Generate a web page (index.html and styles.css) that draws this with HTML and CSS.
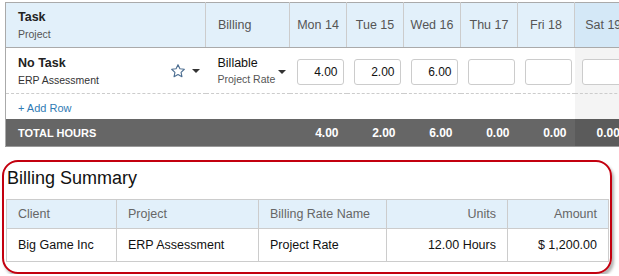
FILE: index.html
```html
<!DOCTYPE html>
<html lang="en">
<head>
    <meta charset="UTF-8" />
    <title>Timesheet</title>
    <link rel="stylesheet" href="styles.css">
</head>
<body>

<table class="sheet">
    <colgroup>
        <col class="c-task"><col class="c-billing">
        <col class="c-day"><col class="c-day"><col class="c-day"><col class="c-day"><col class="c-day"><col class="c-day">
    </colgroup>
    <thead>
        <tr>
            <th class="task-head">
                <div class="title">Task</div>
                <div class="sub">Project</div>
            </th>
            <th class="bill-head">Billing</th>
            <th class="day">Mon 14</th>
            <th class="day">Tue 15</th>
            <th class="day">Wed 16</th>
            <th class="day">Thu 17</th>
            <th class="day">Fri 18</th>
            <th class="day weekend">Sat 19</th>
        </tr>
    </thead>
    <tbody>
        <tr class="entry">
            <td>
                <div class="task-cell">
                    <div>
                        <div class="title">No Task</div>
                        <div class="sub">ERP Assessment</div>
                    </div>
                    <div class="task-tools">
                        <svg width="16" height="16" viewBox="0 0 24 24"><path d="M12 2.5l2.9 6.1 6.6.8-4.9 4.6 1.3 6.6L12 17.3l-5.9 3.3 1.3-6.6-4.9-4.6 6.6-.8z" fill="none" stroke="#4e6f92" stroke-width="1.7" stroke-linejoin="round"/></svg>
                        <span class="caret"></span>
                    </div>
                </div>
            </td>
            <td>
                <div class="bill-cell">
                    <div>
                        <div class="bill-type">Billable</div>
                        <div class="sub">Project Rate</div>
                    </div>
                    <span class="caret"></span>
                </div>
            </td>
            <td class="hrs"><input type="text" value="4.00"></td>
            <td class="hrs"><input type="text" value="2.00"></td>
            <td class="hrs"><input type="text" value="6.00"></td>
            <td class="hrs"><input type="text" value=""></td>
            <td class="hrs"><input type="text" value=""></td>
            <td class="hrs weekend"><input type="text" value=""></td>
        </tr>
        <tr class="add">
            <td colspan="7"><a href="#">+ Add Row</a></td>
            <td class="weekend"></td>
        </tr>
        <tr class="total">
            <td colspan="2">TOTAL HOURS</td>
            <td>4.00</td>
            <td>2.00</td>
            <td>6.00</td>
            <td>0.00</td>
            <td>0.00</td>
            <td class="weekend">0.00</td>
        </tr>
    </tbody>
</table>

<div class="summary">
    <h2>Billing Summary</h2>
    <table class="summary-table">
        <colgroup>
            <col style="width:110px"><col style="width:142px"><col style="width:128px"><col style="width:121px"><col style="width:101px">
        </colgroup>
        <tr>
            <th>Client</th>
            <th>Project</th>
            <th>Billing Rate Name</th>
            <th class="num">Units</th>
            <th class="num">Amount</th>
        </tr>
        <tr>
            <td>Big Game Inc</td>
            <td>ERP Assessment</td>
            <td>Project Rate</td>
            <td class="num">12.00 Hours</td>
            <td class="num">$ 1,200.00</td>
        </tr>
    </table>
</div>

</body>
</html>
```

FILE: styles.css
```css
body { margin: 0; font-family: "Liberation Sans", Arial, sans-serif; background: #fff; color: #222; overflow: hidden; }

.sheet {
    border-collapse: collapse; table-layout: fixed; width: 626px;
    margin: 2px 0 0 5px; border: 1px solid #aaa; border-right: none;
}
.c-task { width: 200px; }
.c-billing { width: 84px; }
.c-day { width: 57px; }

.sheet th {
    background: #e2f0fa; height: 44px; padding: 0; font-weight: normal;
    color: #555; font-size: 12.5px; border-left: 1px solid #ccc; border-bottom: 1px solid #aaa;
    white-space: nowrap; overflow: hidden;
}
.sheet th.task-head { text-align: left; padding-left: 12px; border-left: none; }
.sheet th.bill-head { text-align: left; padding-left: 12px; }
.sheet th.weekend { background: #d4e8f7; }

.title { font-weight: bold; font-size: 12.5px; color: #222; }
.sub { font-size: 10.5px; color: #555; margin-top: 4px; }

.entry td { height: 43px; padding: 0; border-bottom: 1px dashed #ccc; vertical-align: middle; }
.task-cell { display: flex; justify-content: space-between; align-items: center; padding: 0 6px 0 12px; }
.task-cell .sub { color: #333; }
.task-tools { display: flex; align-items: center; gap: 6px; }
.caret {
    display: inline-block; width: 0; height: 0;
    border-left: 4px solid transparent; border-right: 4px solid transparent; border-top: 4px solid #333;
}
.bill-cell { display: flex; justify-content: space-between; align-items: center; padding: 0 4px 0 12px; }
.bill-type { font-size: 12.5px; color: #111; }
.bill-cell .sub { margin-top: 3px; }
.bill-cell .caret { margin-top: 2px; }

.hrs { padding: 2px 3px 0 7px !important; }
.hrs input {
    width: 47px; height: 26px; box-sizing: border-box; border: 1px solid #ccc; border-radius: 3px;
    font-family: inherit; font-size: 12px; text-align: right; padding: 0 5px; color: #111; display: block;
}
.entry td.weekend, .add td.weekend { background: #f4f4f4; }

.add td { height: 25px; padding: 0 0 0 12px; }
.add td.weekend { padding: 0; }
.add a { color: #2f7bb5; font-size: 11px; text-decoration: none; }

.total td {
    background: #666; color: #fff; font-weight: bold; font-size: 12px; height: 27px;
    text-align: right; padding: 0 8px 0 0; border-bottom: 1px solid #999;
}
.total td:first-child { text-align: left; font-size: 11px; padding-left: 12px; }
.total td.weekend { background: #5b5b5b; text-align: left; padding: 0 0 0 22px; }

.summary {
    box-sizing: border-box; width: 610px; margin: 13px 0 0 2px; padding: 6px 0 10px 2px;
    border: 2px solid #c3000f; border-radius: 16px; box-shadow: 2px 3px 3px rgba(0, 0, 0, 0.3);
}
.summary h2 { margin: 0 0 10px 1px; font-size: 18px; font-weight: normal; color: #111; line-height: 21px; }
.summary-table { border-collapse: collapse; table-layout: fixed; width: 602px; border: 1px solid #aaa; font-size: 12.5px; }
.summary-table th {
    background: #e2f0fa; color: #666; font-weight: normal; text-align: left;
    height: 28px; padding: 0 11px; border: 1px solid #ccc;
}
.summary-table td { height: 32px; padding: 0 11px; border: 1px solid #ccc; color: #111; }
.summary-table .num { text-align: right; }
```
